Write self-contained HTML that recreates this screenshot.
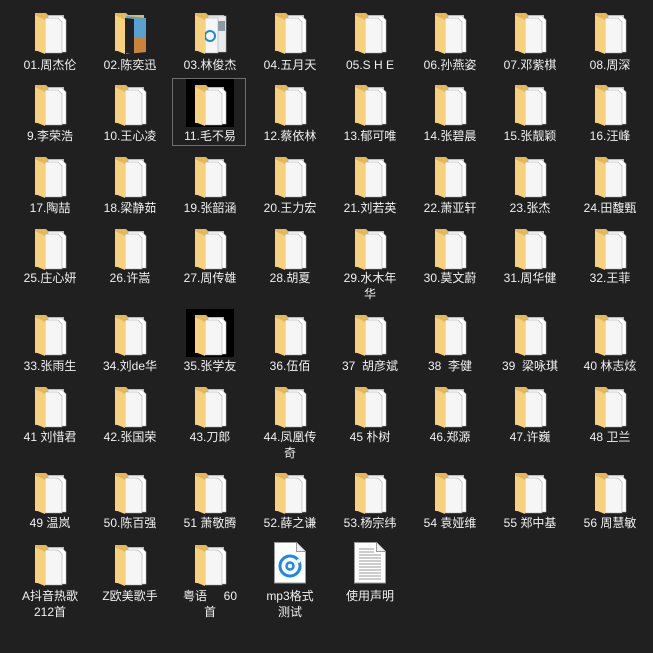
<!DOCTYPE html>
<html><head><meta charset="utf-8"><style>
html,body{margin:0;padding:0;background:#202020;width:653px;height:653px;overflow:hidden;position:relative}
.i{position:absolute;width:48px;height:48px}
.l{position:absolute;width:78px;text-align:center;color:#f0f0f0;font:12px/16px "Liberation Sans","Noto Sans CJK SC",sans-serif;word-break:break-all}
.blk{background:#000}
.sel{position:absolute;left:172px;top:78px;width:72px;height:66px;border:1px solid #6e6e6e}
</style></head><body>
<svg width="0" height="0" style="position:absolute">
<defs>
<symbol id="f" viewBox="0 0 48 48">
<path d="M9 6h11l2 2h16v36H9z" fill="#e4b95a"/>
<path d="M22 9h14l4 4v32H22z" fill="#fff" stroke="#b8b8b8" stroke-width=".6"/>
<path d="M19 11h13l4 4v31H19z" fill="#f6f6f6" stroke="#a8a8a8" stroke-width=".6"/>
<path d="M9 8l10 5v34l-10-4z" fill="#f6d27e"/>
</symbol>
<symbol id="f2" viewBox="0 0 48 48">
<path d="M9 6h11l2 2h16v36H9z" fill="#e4b95a"/>
<path d="M20 9l20 2v34l-20 2z" fill="#5aa0d0"/>
<path d="M20 30l20 0v15l-20 2z" fill="#c9833a"/>
<path d="M19 11l9 1v35l-9-1z" fill="#222"/>
<path d="M9 8l10 5v34l-10-4z" fill="#f6d27e"/>
</symbol>
<symbol id="f3" viewBox="0 0 48 48">
<path d="M9 6h11l2 2h16v36H9z" fill="#e4b95a"/>
<path d="M22 9h18v36H22z" fill="#e8ecef" stroke="#b8b8b8" stroke-width=".6"/>
<rect x="31" y="14" width="8" height="10" fill="#8a9aa4"/>
<path d="M19 11h13v35H19z" fill="#f6f6f6" stroke="#a8a8a8" stroke-width=".6"/>
<circle cx="24" cy="29" r="5" fill="none" stroke="#1e88e5" stroke-width="2"/>
<path d="M9 8l10 5v34l-10-4z" fill="#f6d27e"/>
</symbol>
</defs></svg>

<div class="sel"></div>

<!-- Row 1 top 7 -->
<svg class="i" style="left:26px;top:7px"><use href="#f"/></svg><div class="l" style="left:11px;top:57px">01.周杰伦</div>
<svg class="i" style="left:106px;top:7px"><use href="#f2"/></svg><div class="l" style="left:91px;top:57px">02.陈奕迅</div>
<svg class="i" style="left:186px;top:7px"><use href="#f3"/></svg><div class="l" style="left:171px;top:57px">03.林俊杰</div>
<svg class="i" style="left:266px;top:7px"><use href="#f"/></svg><div class="l" style="left:251px;top:57px">04.五月天</div>
<svg class="i" style="left:346px;top:7px"><use href="#f"/></svg><div class="l" style="left:331px;top:57px">05.S H E</div>
<svg class="i" style="left:426px;top:7px"><use href="#f"/></svg><div class="l" style="left:411px;top:57px">06.孙燕姿</div>
<svg class="i" style="left:506px;top:7px"><use href="#f"/></svg><div class="l" style="left:491px;top:57px">07.邓紫棋</div>
<svg class="i" style="left:586px;top:7px"><use href="#f"/></svg><div class="l" style="left:571px;top:57px">08.周深</div>

<!-- Row 2 top 79 -->
<svg class="i" style="left:26px;top:79px"><use href="#f"/></svg><div class="l" style="left:11px;top:128px">9.李荣浩</div>
<svg class="i" style="left:106px;top:79px"><use href="#f"/></svg><div class="l" style="left:91px;top:128px">10.王心凌</div>
<svg class="i blk" style="left:186px;top:79px"><use href="#f"/></svg><div class="l" style="left:171px;top:128px">11.毛不易</div>
<svg class="i" style="left:266px;top:79px"><use href="#f"/></svg><div class="l" style="left:251px;top:128px">12.蔡依林</div>
<svg class="i" style="left:346px;top:79px"><use href="#f"/></svg><div class="l" style="left:331px;top:128px">13.郁可唯</div>
<svg class="i" style="left:426px;top:79px"><use href="#f"/></svg><div class="l" style="left:411px;top:128px">14.张碧晨</div>
<svg class="i" style="left:506px;top:79px"><use href="#f"/></svg><div class="l" style="left:491px;top:128px">15.张靓颖</div>
<svg class="i" style="left:586px;top:79px"><use href="#f"/></svg><div class="l" style="left:571px;top:128px">16.汪峰</div>

<!-- Row 3 top 151 -->
<svg class="i" style="left:26px;top:151px"><use href="#f"/></svg><div class="l" style="left:11px;top:200px">17.陶喆</div>
<svg class="i" style="left:106px;top:151px"><use href="#f"/></svg><div class="l" style="left:91px;top:200px">18.梁静茹</div>
<svg class="i" style="left:186px;top:151px"><use href="#f"/></svg><div class="l" style="left:171px;top:200px">19.张韶涵</div>
<svg class="i" style="left:266px;top:151px"><use href="#f"/></svg><div class="l" style="left:251px;top:200px">20.王力宏</div>
<svg class="i" style="left:346px;top:151px"><use href="#f"/></svg><div class="l" style="left:331px;top:200px">21.刘若英</div>
<svg class="i" style="left:426px;top:151px"><use href="#f"/></svg><div class="l" style="left:411px;top:200px">22.萧亚轩</div>
<svg class="i" style="left:506px;top:151px"><use href="#f"/></svg><div class="l" style="left:491px;top:200px">23.张杰</div>
<svg class="i" style="left:586px;top:151px"><use href="#f"/></svg><div class="l" style="left:571px;top:200px">24.田馥甄</div>

<!-- Row 4 top 223 -->
<svg class="i" style="left:26px;top:223px"><use href="#f"/></svg><div class="l" style="left:11px;top:270px">25.庄心妍</div>
<svg class="i" style="left:106px;top:223px"><use href="#f"/></svg><div class="l" style="left:91px;top:270px">26.许嵩</div>
<svg class="i" style="left:186px;top:223px"><use href="#f"/></svg><div class="l" style="left:171px;top:270px">27.周传雄</div>
<svg class="i" style="left:266px;top:223px"><use href="#f"/></svg><div class="l" style="left:251px;top:270px">28.胡夏</div>
<svg class="i" style="left:346px;top:223px"><use href="#f"/></svg><div class="l" style="left:331px;top:270px">29.水木年<br>华</div>
<svg class="i" style="left:426px;top:223px"><use href="#f"/></svg><div class="l" style="left:411px;top:270px">30.莫文蔚</div>
<svg class="i" style="left:506px;top:223px"><use href="#f"/></svg><div class="l" style="left:491px;top:270px">31.周华健</div>
<svg class="i" style="left:586px;top:223px"><use href="#f"/></svg><div class="l" style="left:571px;top:270px">32.王菲</div>

<!-- Row 5 top 309 -->
<svg class="i" style="left:26px;top:309px"><use href="#f"/></svg><div class="l" style="left:11px;top:358px">33.张雨生</div>
<svg class="i" style="left:106px;top:309px"><use href="#f"/></svg><div class="l" style="left:91px;top:358px">34.刘de华</div>
<svg class="i blk" style="left:186px;top:309px"><use href="#f"/></svg><div class="l" style="left:171px;top:358px">35.张学友</div>
<svg class="i" style="left:266px;top:309px"><use href="#f"/></svg><div class="l" style="left:251px;top:358px">36.伍佰</div>
<svg class="i" style="left:346px;top:309px"><use href="#f"/></svg><div class="l" style="left:331px;top:358px">37&nbsp;&nbsp;胡彦斌</div>
<svg class="i" style="left:426px;top:309px"><use href="#f"/></svg><div class="l" style="left:411px;top:358px">38&nbsp;&nbsp;李健</div>
<svg class="i" style="left:506px;top:309px"><use href="#f"/></svg><div class="l" style="left:491px;top:358px">39&nbsp;&nbsp;梁咏琪</div>
<svg class="i" style="left:586px;top:309px"><use href="#f"/></svg><div class="l" style="left:571px;top:358px">40 林志炫</div>

<!-- Row 6 top 381 -->
<svg class="i" style="left:26px;top:381px"><use href="#f"/></svg><div class="l" style="left:11px;top:429px">41 刘惜君</div>
<svg class="i" style="left:106px;top:381px"><use href="#f"/></svg><div class="l" style="left:91px;top:429px">42.张国荣</div>
<svg class="i" style="left:186px;top:381px"><use href="#f"/></svg><div class="l" style="left:171px;top:429px">43.刀郎</div>
<svg class="i" style="left:266px;top:381px"><use href="#f"/></svg><div class="l" style="left:251px;top:429px">44.凤凰传<br>奇</div>
<svg class="i" style="left:346px;top:381px"><use href="#f"/></svg><div class="l" style="left:331px;top:429px">45 朴树</div>
<svg class="i" style="left:426px;top:381px"><use href="#f"/></svg><div class="l" style="left:411px;top:429px">46.郑源</div>
<svg class="i" style="left:506px;top:381px"><use href="#f"/></svg><div class="l" style="left:491px;top:429px">47.许巍</div>
<svg class="i" style="left:586px;top:381px"><use href="#f"/></svg><div class="l" style="left:571px;top:429px">48 卫兰</div>

<!-- Row 7 top 467 -->
<svg class="i" style="left:26px;top:467px"><use href="#f"/></svg><div class="l" style="left:11px;top:515px">49 温岚</div>
<svg class="i" style="left:106px;top:467px"><use href="#f"/></svg><div class="l" style="left:91px;top:515px">50.陈百强</div>
<svg class="i" style="left:186px;top:467px"><use href="#f"/></svg><div class="l" style="left:171px;top:515px">51 萧敬腾</div>
<svg class="i" style="left:266px;top:467px"><use href="#f"/></svg><div class="l" style="left:251px;top:515px">52.薛之谦</div>
<svg class="i" style="left:346px;top:467px"><use href="#f"/></svg><div class="l" style="left:331px;top:515px">53.杨宗纬</div>
<svg class="i" style="left:426px;top:467px"><use href="#f"/></svg><div class="l" style="left:411px;top:515px">54 袁娅维</div>
<svg class="i" style="left:506px;top:467px"><use href="#f"/></svg><div class="l" style="left:491px;top:515px">55 郑中基</div>
<svg class="i" style="left:586px;top:467px"><use href="#f"/></svg><div class="l" style="left:571px;top:515px">56 周慧敏</div>

<!-- Row 8 top 539 -->
<svg class="i" style="left:26px;top:539px"><use href="#f"/></svg><div class="l" style="left:11px;top:588px">A抖音热歌<br>212首</div>
<svg class="i" style="left:106px;top:539px"><use href="#f"/></svg><div class="l" style="left:91px;top:588px">Z欧美歌手</div>
<svg class="i" style="left:186px;top:539px"><use href="#f"/></svg><div class="l" style="left:171px;top:588px">粤语&nbsp;&nbsp;&nbsp;&nbsp;&nbsp;60<br>首</div>
<svg class="i" style="left:266px;top:539px" viewBox="0 0 48 48">
<path d="M8.5 3.5h22l9 9v31.5h-31z" fill="#fff" stroke="#9a9a9a"/>
<path d="M30.5 3.5v9h9" fill="#eee" stroke="#9a9a9a"/>
<circle cx="24" cy="27" r="10" fill="none" stroke="#1e88e5" stroke-width="3"/>
<circle cx="24" cy="27" r="3.5" fill="none" stroke="#1e88e5" stroke-width="2.5"/>
<path d="M31 21l3 2" stroke="#fff" stroke-width="3"/>
</svg><div class="l" style="left:251px;top:588px">mp3格式<br>测试</div>
<svg class="i" style="left:346px;top:539px" viewBox="0 0 48 48">
<path d="M8.5 3.5h22l9 9v31.5h-31z" fill="#fff" stroke="#9a9a9a"/>
<path d="M30.5 3.5v9h9" fill="#eee" stroke="#9a9a9a"/>
<g stroke="#9a9a9a" stroke-width="1"><path d="M13 10h15M13 13h15M13 16h22M13 19h22M13 22h22M13 25h22M13 28h22M13 31h22M13 34h22M13 37h22M13 40h22"/></g>
</svg><div class="l" style="left:331px;top:588px">使用声明</div>
</body></html>
